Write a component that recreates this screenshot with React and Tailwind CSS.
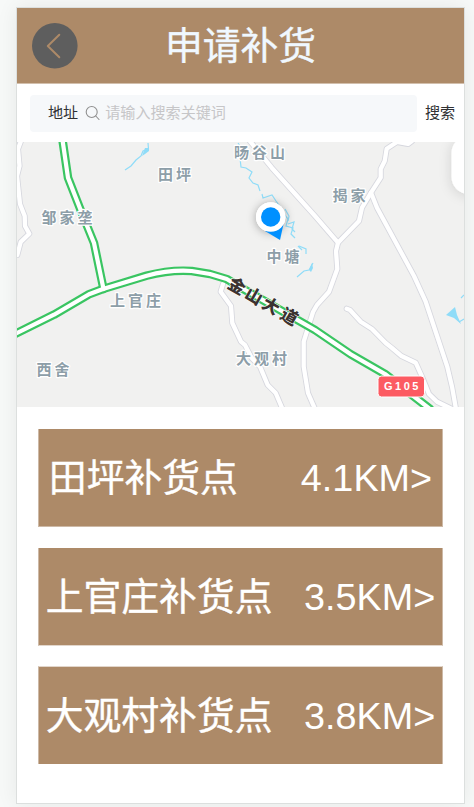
const points = [
  { name: "田坪补货点", distance: "4.1KM>", look: "gap-[63px] mb-[21px] border-x border-b border-[#cdb9a6]" },
  { name: "上官庄补货点", distance: "3.5KM>", look: "gap-[31.5px] mb-5 border-x border-b border-x-[#cdb9a6] border-b-[#e2d6cb]" },
  { name: "大观村补货点", distance: "3.8KM>", look: "gap-[31.5px] border-x border-t border-x-[#cdb9a6] border-t-[#e2d6cb]" },
];

const roads = [
  "M21 141L18 149L19.5 166L17 176L20 204L24.7 216L25 226L29.3 233.7L20.7 242L17.3 255",
  "M249 140L271.7 167.7L315 216L338 242.7",
  "M412 141L408 144L397 142L386.7 148.7L384.7 161L380.7 169V177.7L371 192.7L362 207.7L359 221L338 242.7L336 251L337.3 269L329 291.7L317 305L313 312L303.7 341.7V366.7L308 393L315 409",
  "M371 192.7L377 207.7L414 276L425.7 301.7L447.3 366.7L452 386.7L456 409",
  "M223 284L220.7 291.7L231 306L232.3 323L241 341.7L245 345L251.7 358L260 366.7L267.7 385L275.7 393L282.5 409",
  "M346.7 308.7L350 310L360.7 321.7L372 329L385.7 343L392 348L401 355.7L415.7 362.7L422 376.7L429 394L437 401.7L452 409",
];

const highways = [
  "M62.5 140L68 177.7L81.7 212.7L94 243L103.5 289",
  "M14 334.5L54 314.7L89 294.3L103 289L146.7 275.7Q170 269.5 191.7 271L210 274L226.7 279L240 287L315 330L350.7 354.3L385 374L430 409",
];

const streams = [
  "M148 143L148.500 149L143 151L141 156L136 160L131 166L125 170",
  "M238 143L243 150L240 158L241 167L246 168L252 172L249 178L253 183L258 185L260 191M262 194L263 198L272 195L276 201L281 208L284 214L288 219L286 226L293 228L291 234L295 238M299 246L306 249L306 254M313 263L309 270L304 271L297 277",
  "M285 209L289 216L288 221M288 224L294 222L292 229L295 232M298 246L302 250",
  "M464 319L459 322M464 295L461 298",
];

const places = [
  { t: "邹家垄", x: 41.5, y: 222.5 },
  { t: "田坪", x: 158, y: 180 },
  { t: "旸谷山", x: 234, y: 158 },
  { t: "揭家", x: 332.5, y: 201 },
  { t: "中塘", x: 266.5, y: 262 },
  { t: "上官庄", x: 110, y: 306 },
  { t: "大观村", x: 236, y: 364 },
  { t: "西舍", x: 36.5, y: 375 },
];

const street = [
  { t: "金", x: 237, y: 286 },
  { t: "山", x: 254, y: 296 },
  { t: "大", x: 271, y: 306 },
  { t: "道", x: 289.5, y: 316.5 },
];

function Map() {
  return (
    <svg viewBox="17 142 447 265" className="block h-[265px] w-[447px] shrink-0 overflow-hidden bg-[#f1f1f0]">
      <defs>
        <filter id="soft" x="-80%" y="-80%" width="260%" height="260%">
          <feDropShadow dx="0" dy="1" stdDeviation="5" floodColor="#000" floodOpacity="0.35" />
        </filter>
        <filter id="pale" x="-60%" y="-60%" width="220%" height="220%">
          <feDropShadow dx="-1" dy="2" stdDeviation="6" floodColor="#000" floodOpacity="0.12" />
        </filter>
      </defs>
      <g fill="none" stroke="#8fdcf8" strokeWidth="1.2">
        {streams.map((d) => <path key={d} d={d} />)}
      </g>
      <path d="M446 315L455 307L457 315L461 324L454 318ZM145 148h4v3l-4 3-3 2z M309 270l3-7 1 5-2 4z" fill="#8fdcf8" />
      <g fill="none" strokeLinejoin="round" strokeLinecap="round">
        {roads.map((d) => <path key={d} d={d} stroke="#d6d7de" strokeWidth="6" />)}
        {roads.map((d) => <path key={d} d={d} stroke="#fff" strokeWidth="4.3" />)}
        {highways.map((d) => <path key={d} d={d} stroke="#3ac562" strokeWidth="8.6" />)}
        {highways.map((d) => <path key={d} d={d} stroke="#fff" strokeWidth="4.2" />)}
      </g>
      <g className="font-['Noto_Sans_CJK_SC',sans-serif] text-[15px] font-bold tracking-[3px]" fill="#8d9ea8" stroke="#fff" strokeWidth="2.4" strokeLinejoin="round" paintOrder="stroke">
        {places.map((p) => <text key={p.t} x={p.x} y={p.y}>{p.t}</text>)}
      </g>
      <g className="font-['Noto_Sans_CJK_SC',sans-serif] text-[17px] font-black" fill="#3b3331" stroke="#fff" strokeWidth="1" paintOrder="stroke" textAnchor="middle">
        {street.map((p) => (
          <text key={p.t} x={p.x} y={p.y + 6.2} transform={`rotate(30 ${p.x} ${p.y})`}>{p.t}</text>
        ))}
      </g>
      <rect x="378" y="376" width="46.5" height="21" rx="3.5" fill="#fc5b62" stroke="#fff" strokeWidth="1" />
      <text x="384" y="390.3" fill="#fff" className="font-['Liberation_Sans',sans-serif] text-[11px] font-bold tracking-[2.5px]">G105</text>
      <circle cx="270.7" cy="217" r="14.5" fill="#fff" filter="url(#soft)" />
      <path d="M265 231L280 240L283.5 224Z" fill="#0090ff" />
      <circle cx="270.7" cy="217" r="14.8" fill="#fff" />
      <circle cx="270.7" cy="217" r="9.7" fill="#0090ff" />
      <rect x="451.5" y="136" width="50" height="58" rx="17" fill="#fff" filter="url(#pale)" />
    </svg>
  );
}

export default function App() {
  return (
    <div className="h-[807px] w-[474px] overflow-hidden bg-[#f7f9f8] pt-[7px] pl-4 font-['Liberation_Sans','Noto_Sans_CJK_SC',sans-serif]">
      <div className="flex h-[797px] w-[449px] flex-col border border-[#dcdfde] bg-white shadow-[0_0_20px_rgba(0,0,0,0.07)]">
        <header className="grid h-[76px] shrink-0 grid-cols-[75px_1fr_75px] items-center border-b border-[#d2bfac] bg-[#ad8a68]">
          <button className="ml-[15px] flex size-[46px] items-center justify-center">
            <svg viewBox="0 0 46 46" className="size-[46px]" fill="none" stroke="#ad8a68" strokeWidth="2" strokeLinecap="round" strokeLinejoin="round">
              <circle cx="22.8" cy="22.8" r="22.8" fill="#5e5e5e" stroke="none" />
              <path d="M27.3 11.7L15.8 23L27.3 34.3" />
            </svg>
          </button>
          <h1 className="pt-px text-center text-[37.8px] leading-[56px] whitespace-nowrap text-[#f0f8ff] [-webkit-text-stroke:0.4px_#f0f8ff]">申请补货</h1>
        </header>

        <div className="flex h-[58px] shrink-0 items-center pl-[13px]">
          <div className="flex h-[37px] w-[387px] items-center rounded-sm bg-[#f6f8fa] pl-[18px] text-[15.1px]">
            <span className="text-[#303133]">地址</span>
            <svg viewBox="0 0 16 16" className="mr-[4px] ml-[7px] size-4" fill="none" stroke="#909090" strokeWidth="1.1" strokeLinecap="round">
              <circle cx="6.7" cy="7" r="5.5" />
              <path d="M10.8 11L14 14.5" />
            </svg>
            <span className="text-[#c6c6c8]">请输入搜索关键词</span>
          </div>
          <span className="ml-2 text-[15.1px] text-[#303133]">搜索</span>
        </div>

        <Map />

        <main className="flex flex-col px-[21px] pt-[22px]">
          {points.map((p) => (
            <div key={p.name} className={`flex h-[98px] items-center justify-center bg-[#ad8a68] text-[37.8px] leading-[50px] whitespace-nowrap text-white ${p.look}`}>
              <span className="[-webkit-text-stroke:0.4px_white]">{p.name}</span>
              <span>{p.distance}</span>
            </div>
          ))}
        </main>
      </div>
    </div>
  );
}
